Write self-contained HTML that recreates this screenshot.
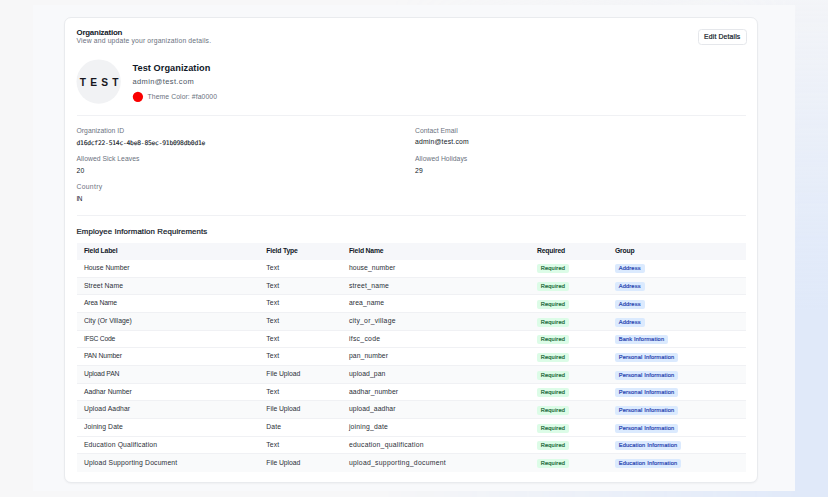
<!DOCTYPE html>
<html lang="en">
<head>
<meta charset="utf-8">
<title>Organization</title>
<style>
*{box-sizing:border-box;margin:0;padding:0}
html,body{width:828px;height:497px;overflow:hidden}
body{font-family:"Liberation Sans",sans-serif;color:#111827;background:#f7f7f8;position:relative}
.tint{position:absolute;left:0;top:0;width:828px;height:497px;-webkit-mask-image:linear-gradient(to right,transparent 380px,rgba(0,0,0,.5) 600px,#000 800px);mask-image:linear-gradient(to right,transparent 380px,rgba(0,0,0,.5) 600px,#000 800px)}
.tint i{display:block;width:100%;height:100%;background:linear-gradient(to bottom,rgba(224,233,249,.15) 0,rgba(224,233,249,.55) 125px,rgba(224,233,249,.92) 250px,#e0e9f9 310px)}
.panel{position:absolute;left:33px;top:5px;width:762px;height:486px;background:#f8f9fb}
.card{position:absolute;left:64px;top:17px;width:694px;height:466px;background:#fff;border:1px solid #e9ebee;border-radius:7px;box-shadow:0 1px 2px rgba(0,0,0,.04)}
.abs{position:absolute;white-space:nowrap;line-height:1}
.h1{left:76.5px;top:28.9px;font-size:7.9px;font-weight:700;letter-spacing:-.22px;color:#111827}
.sub{left:76.5px;top:37.6px;font-size:6.8px;letter-spacing:.16px;color:#6b7280}
.btn{position:absolute;left:698px;top:29px;width:48.5px;height:15.5px;border:1px solid #e5e7eb;border-radius:3.5px;background:#fff;font-size:6.8px;font-weight:400;-webkit-text-stroke:.2px #111827;letter-spacing:.16px;text-align:center;line-height:14px;color:#111827}
.shapes{position:absolute;left:0;top:0}
.logo{left:79.7px;top:77.6px;font-size:10.2px;font-weight:700;letter-spacing:4.25px;color:#16161d}
.name{left:132.5px;top:63.8px;font-size:9.2px;font-weight:700;letter-spacing:.06px}
.email{left:132.5px;top:78.1px;font-size:7.5px;letter-spacing:.37px;color:#4b5563}
.theme{left:147.6px;top:93.6px;font-size:6.8px;letter-spacing:.09px;color:#6b7280}
.hr{position:absolute;left:76.5px;width:669.5px;height:1px;background:#f0f1f4}
.lbl{font-size:6.8px;letter-spacing:.03px;color:#6b7280}
.val{font-size:6.8px;letter-spacing:.2px;color:#111827}
.mono{font-family:"DejaVu Sans Mono","Liberation Mono",monospace;font-size:6.3px;letter-spacing:-.218px;-webkit-text-stroke:.12px #111827;color:#111827}
.h2{left:76.5px;top:228px;font-size:7.8px;font-weight:400;-webkit-text-stroke:.22px #111827;letter-spacing:.13px}
table{position:absolute;left:76.5px;top:242.5px;width:669.5px;border-collapse:collapse;table-layout:fixed;font-size:6.9px}
th{height:17.1px;background:#f6f7fa;text-align:left;font-weight:700;font-size:6.8px;letter-spacing:-.18px;color:#111827;padding:0 0 1px}
td{height:17.68px;padding:0 0 2px;color:#2c3038;font-size:6.8px;letter-spacing:.1px;border-bottom:1px solid #f0f1f4}
tr.g td{background:#f9fafb}
tr:last-child td{border-bottom:0}
th:first-child,td:first-child{padding-left:7.4px}
.b{display:inline-block;position:relative;top:1.7px;font-size:5.7px;font-weight:400;letter-spacing:.16px;line-height:9.1px;height:9.1px;padding:0 4px 0 3.7px;border-radius:2px;vertical-align:middle}
.gr{background:#dcfce7;color:#166534;-webkit-text-stroke:.18px #166534}
.bl{background:#dbeafe;color:#1e40af;-webkit-text-stroke:.18px #1e40af}
</style>
</head>
<body>
<div class="tint"><i></i></div>
<div class="panel"></div>
<div class="card"></div>
<div class="abs h1">Organization</div>
<div class="abs sub">View and update your organization details.</div>
<div class="btn">Edit Details</div>
<svg class="shapes" width="828" height="497" viewBox="0 0 828 497"><circle cx="98.65" cy="81.55" r="22.15" fill="#f1f2f4"/><circle cx="137.9" cy="96.85" r="5.15" fill="#fa0000"/></svg>
<div class="abs logo">TEST</div>
<div class="abs name">Test Organization</div>
<div class="abs email">admin@test.com</div>
<div class="abs theme">Theme Color: #fa0000</div>
<div class="hr" style="top:114.5px"></div>
<div class="abs lbl" style="left:76.5px;top:127.5px">Organization ID</div>
<div class="abs mono" style="left:76.5px;top:140.1px">d16dcf22-514c-4be8-85ec-91b098db0d1e</div>
<div class="abs lbl" style="left:76.5px;top:155.5px">Allowed Sick Leaves</div>
<div class="abs val" style="left:76.5px;top:167.6px">20</div>
<div class="abs lbl" style="left:76.5px;top:183.7px;letter-spacing:.3px">Country</div>
<div class="abs val" style="left:76.5px;top:196px;letter-spacing:-.5px;font-size:6.4px">IN</div>
<div class="abs lbl" style="left:415px;top:127.5px">Contact Email</div>
<div class="abs val" style="left:415px;top:139.4px">admin@test.com</div>
<div class="abs lbl" style="left:415px;top:155.5px">Allowed Holidays</div>
<div class="abs val" style="left:415px;top:167.6px">29</div>
<div class="hr" style="top:214.5px"></div>
<div class="abs h2">Employee Information Requirements</div>
<table>
<colgroup><col style="width:189.8px"><col style="width:82.6px"><col style="width:188.1px"><col style="width:78px"><col></colgroup>
<thead><tr><th>Field Label</th><th>Field Type</th><th>Field Name</th><th>Required</th><th>Group</th></tr></thead>
<tbody>
<tr><td style="letter-spacing:0px">House Number</td><td>Text</td><td>house_number</td><td><span class="b gr">Required</span></td><td><span class="b bl">Address</span></td></tr>
<tr class="g"><td>Street Name</td><td>Text</td><td style="letter-spacing:0.22px">street_name</td><td><span class="b gr">Required</span></td><td><span class="b bl">Address</span></td></tr>
<tr><td style="letter-spacing:-0.14px">Area Name</td><td>Text</td><td>area_name</td><td><span class="b gr">Required</span></td><td><span class="b bl">Address</span></td></tr>
<tr class="g"><td style="letter-spacing:0px">City (Or Village)</td><td>Text</td><td style="letter-spacing:0.25px">city_or_village</td><td><span class="b gr">Required</span></td><td><span class="b bl">Address</span></td></tr>
<tr><td style="letter-spacing:-0.28px">IFSC Code</td><td>Text</td><td style="letter-spacing:0.31px">ifsc_code</td><td><span class="b gr">Required</span></td><td><span class="b bl">Bank Information</span></td></tr>
<tr><td style="letter-spacing:-0.17px">PAN Number</td><td>Text</td><td>pan_number</td><td><span class="b gr">Required</span></td><td><span class="b bl">Personal Information</span></td></tr>
<tr class="g"><td style="letter-spacing:-0.14px">Upload PAN</td><td style="letter-spacing:-0.03px">File Upload</td><td>upload_pan</td><td><span class="b gr">Required</span></td><td><span class="b bl">Personal Information</span></td></tr>
<tr><td style="letter-spacing:-0.01px">Aadhar Number</td><td>Text</td><td>aadhar_number</td><td><span class="b gr">Required</span></td><td><span class="b bl">Personal Information</span></td></tr>
<tr class="g"><td>Upload Aadhar</td><td style="letter-spacing:-0.03px">File Upload</td><td>upload_aadhar</td><td><span class="b gr">Required</span></td><td><span class="b bl">Personal Information</span></td></tr>
<tr><td>Joining Date</td><td>Date</td><td style="letter-spacing:0.2px">joining_date</td><td><span class="b gr">Required</span></td><td><span class="b bl">Personal Information</span></td></tr>
<tr><td style="letter-spacing:0.165px">Education Qualification</td><td>Text</td><td style="letter-spacing:0.25px">education_qualification</td><td><span class="b gr">Required</span></td><td><span class="b bl">Education Information</span></td></tr>
<tr class="g"><td style="letter-spacing:0.165px">Upload Supporting Document</td><td style="letter-spacing:-0.03px">File Upload</td><td style="letter-spacing:0.29px">upload_supporting_document</td><td><span class="b gr">Required</span></td><td><span class="b bl">Education Information</span></td></tr>
</tbody>
</table>
</body>
</html>
